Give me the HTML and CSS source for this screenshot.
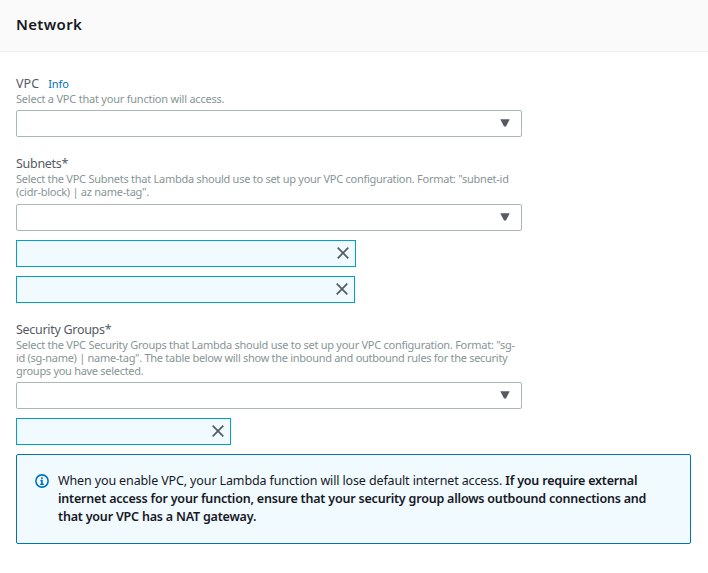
FILE: index.html
```
<!DOCTYPE html>
<html lang="en">
<head>
<meta charset="utf-8">
<title>Network</title>
<link rel="stylesheet" href="styles.css">
</head>
<body>
<header class="panel-header"><h2>Network</h2></header>
<main class="panel-body">
  <section class="field field-vpc">
    <div class="label"><span class="acronym">VPC</span> <a class="info">Info</a></div>
    <p class="hint">Select a VPC that your function will access.</p>
    <div class="select"><svg class="caret" viewBox="0 0 10 8"><path d="M0.3 0.3h9.4L6 7.5H4z"/></svg></div>
  </section>
  <section class="field field-subnets">
    <div class="label">Subnets*</div>
    <p class="hint hint-long">Select the VPC Subnets that Lambda should use to set up your VPC configuration. Format: "subnet-id<br>(cidr-block) | az name-tag".</p>
    <div class="select"><svg class="caret" viewBox="0 0 10 8"><path d="M0.3 0.3h9.4L6 7.5H4z"/></svg></div>
    <div class="token token-a"><svg class="close" viewBox="0 0 12 12"><path d="M0.7 0.7l10.6 10.6M11.3 0.7L0.7 11.3"/></svg></div>
    <div class="token token-b"><svg class="close" viewBox="0 0 12 12"><path d="M0.7 0.7l10.6 10.6M11.3 0.7L0.7 11.3"/></svg></div>
  </section>
  <section class="field field-groups">
    <div class="label">Security Groups*</div>
    <p class="hint hint-long">Select the VPC Security Groups that Lambda should use to set up your VPC configuration. Format: "sg-<br><span class="tight">id (sg-name) | name-tag". The table below will show the inbound and outbound rules for the security<br>groups you have selected.</span></p>
    <div class="select"><svg class="caret" viewBox="0 0 10 8"><path d="M0.3 0.3h9.4L6 7.5H4z"/></svg></div>
    <div class="token token-c"><svg class="close" viewBox="0 0 12 12"><path d="M0.7 0.7l10.6 10.6M11.3 0.7L0.7 11.3"/></svg></div>
  </section>
  <aside class="alert">
    <svg class="alert-icon" viewBox="0 0 14 14"><circle cx="7" cy="7" r="6.1"/><path d="M7 3.2v1.7M5.4 6.6H7v3.6M5.2 10.2h3.6"/></svg>
    <p>When you enable VPC, your Lambda function will lose default internet access. <b>If you require external<br>internet access for your function, ensure that your security group allows outbound connections and<br>that your VPC has a NAT gateway.</b></p>
  </aside>
</main>
</body>
</html>
```
FILE: styles.css
```
* { box-sizing: border-box; }
body {
  margin: 0;
  background: #fff;
  color: #16191f;
  font-family: "Noto Sans", "Open Sans", sans-serif;
  font-size: 13px;
}
h2, p { margin: 0; }
.panel-header {
  height: 52px;
  padding: 14px 16px 0;
  background: #fafafa;
  border-bottom: 1px solid #eaeded;
}
h2 { font-size: 15px; line-height: 21px; font-weight: 600; letter-spacing: 0.35px; }
.panel-body { padding: 23px 17px 0 16px; }
.field { width: 506px; }
.field-subnets { margin-top: 18px; }
.field-groups { margin-top: 18px; }
.label { color: #545b64; font-size: 12.5px; line-height: 18px; letter-spacing: -0.3px; }
.acronym { letter-spacing: 0.1px; }
.info { margin-left: 6px; color: #0073bb; font-size: 11px; letter-spacing: -0.1px; }
.hint {
  margin-top: -1px;
  color: #879596;
  font-size: 11px;
  line-height: 13px;
  letter-spacing: -0.22px;
  white-space: nowrap;
}
.hint-long { letter-spacing: -0.26px; }
.tight { letter-spacing: -0.29px; }
.select {
  display: flex;
  align-items: center;
  justify-content: flex-end;
  height: 27px;
  margin-top: 5px;
  padding: 0 11px 1px 0;
  border: 1px solid #aab7b8;
  border-radius: 2px;
}
.field-subnets .select { margin-top: 6px; }
.caret { width: 10px; height: 8px; fill: #545b64; }
.token {
  display: flex;
  align-items: center;
  justify-content: flex-end;
  height: 27px;
  margin-top: 9px;
  padding: 0 6px 1px 0;
  background: #f1faff;
  border: 1px solid #00a1c9;
}
.token-a { width: 340px; }
.token-b { width: 339px; }
.token-c { width: 215px; }
.close { width: 12px; height: 12px; fill: none; stroke: #545b64; stroke-width: 1.7; }
.alert {
  display: flex;
  height: 90px;
  margin-top: 9px;
  padding: 17px 18px;
  background: #f1faff;
  border: 1px solid #0073bb;
  border-radius: 2px;
}
.alert-icon { flex: none; width: 14px; height: 14px; margin: 2px 9px 0 0; fill: none; stroke: #0073bb; stroke-width: 1.6; }
.alert p { font-size: 12.5px; line-height: 18px; letter-spacing: -0.13px; white-space: nowrap; }
.alert b { font-weight: 600; letter-spacing: -0.2px; }
```
